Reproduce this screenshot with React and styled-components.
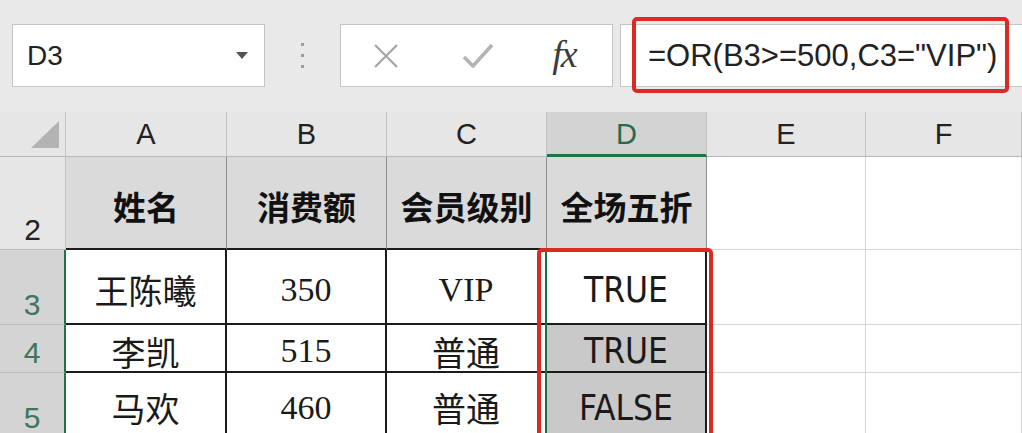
import React from "react";
import styled, { createGlobalStyle } from "styled-components";

const GlobalStyle = createGlobalStyle`
  html, body {
    margin: 0;
    padding: 0;
    background: #ffffff;
    overflow: hidden;
  }
  #root {
    width: 1022px;
    height: 433px;
    overflow: hidden;
  }
`;

const UI_FONT = `"Liberation Sans", Arial, sans-serif`;
const NARROW_FONT = `"Liberation Sans Narrow", "DejaVu Sans Condensed", "Liberation Sans", sans-serif`;
const CJK_SANS = `"Noto Sans CJK SC", sans-serif`;
const CJK_SERIF = `"Liberation Serif", "Noto Sans CJK SC", serif`;

const Page = styled.div`
  width: 1022px;
  height: 433px;
  display: flex;
  flex-direction: column;
  background: #ffffff;
`;

/* ---------- formula bar ---------- */

const Toolbar = styled.div`
  height: 112px;
  flex-shrink: 0;
  box-sizing: border-box;
  padding: 24px 0 0 12px;
  display: flex;
  align-items: flex-start;
  background: #e9e9e9;
`;

const NameBox = styled.div`
  width: 253px;
  height: 63px;
  box-sizing: border-box;
  background: #ffffff;
  border: 1px solid #c4c4c4;
  display: flex;
  align-items: center;
  justify-content: space-between;
  padding: 0 16px 0 14px;
  font-family: ${UI_FONT};
  font-size: 28px;
  color: #222222;
`;

const Caret = styled.span`
  width: 0;
  height: 0;
  border-left: 6px solid transparent;
  border-right: 6px solid transparent;
  border-top: 7px solid #555555;
`;

const Grip = styled.div`
  width: 75px;
  height: 63px;
  display: flex;
  flex-direction: column;
  align-items: center;
  justify-content: center;
  gap: 8px;
`;

const GripDot = styled.span`
  width: 3px;
  height: 3px;
  background: #9c9c9c;
`;

const ButtonBox = styled.div`
  width: 273px;
  height: 63px;
  box-sizing: border-box;
  background: #ffffff;
  border: 1px solid #c4c4c4;
  display: flex;
  align-items: center;
`;

const IconSlot = styled.div`
  width: ${(p) => p.$w}px;
  display: flex;
  justify-content: center;
  align-items: center;
`;

const Fx = styled.span`
  font-family: "Liberation Serif", "DejaVu Serif", serif;
  font-style: italic;
  font-size: 38px;
  color: #3c3c3c;
  letter-spacing: -2px;
  margin-top: -4px;
`;

const FormulaBox = styled.div`
  position: relative;
  flex: 1;
  height: 63px;
  margin-left: 7px;
  box-sizing: border-box;
  background: #ffffff;
  border: 1px solid #c4c4c4;
  border-right: none;
  display: flex;
  align-items: center;
  padding-left: 27px;
  font-family: ${UI_FONT};
  font-size: 31px;
  color: #222222;
  white-space: nowrap;
`;

const Highlight = styled.div`
  position: absolute;
  left: ${(p) => p.$left}px;
  top: ${(p) => p.$top}px;
  width: ${(p) => p.$width}px;
  height: ${(p) => p.$height}px;
  box-sizing: border-box;
  border: 4px solid #dc2a22;
  border-radius: 5px;
  pointer-events: none;
`;

/* ---------- sheet grid ---------- */

const Sheet = styled.div`
  position: relative;
  flex: 1;
  display: grid;
  grid-template-columns: 66px 161px 160px 160px 160px 159px 1fr;
  grid-template-rows: 45px 93px 75px 48px 65px;
  overflow: hidden;
`;

const Corner = styled.div`
  background: #e6e6e6;
  border-right: 1px solid #c2c2c2;
  border-bottom: 1px solid #b8b8b8;
  display: flex;
  align-items: flex-end;
  justify-content: flex-end;
  padding: 0 6px 8px 0;
`;

const ColHead = styled.div`
  box-sizing: border-box;
  background: ${(p) => (p.$active ? "#d3d3d3" : "#e6e6e6")};
  border-right: 1px solid #c2c2c2;
  border-bottom: ${(p) => (p.$active ? "3px solid #217346" : "1px solid #b8b8b8")};
  display: flex;
  align-items: center;
  justify-content: center;
  font-family: ${UI_FONT};
  font-size: 29px;
  color: ${(p) => (p.$active ? "#2a6a4b" : "#222222")};
  padding-top: ${(p) => (p.$active ? "2px" : "0")};
`;

const RowHead = styled.div`
  box-sizing: border-box;
  background: ${(p) => (p.$sel ? "#d4d4d4" : "#e6e6e6")};
  border-right: ${(p) => (p.$sel ? "2px solid #217346" : "1px solid #c2c2c2")};
  border-bottom: 1px solid #bcbcbc;
  display: flex;
  align-items: flex-end;
  justify-content: center;
  padding-bottom: 2px;
  font-family: ${UI_FONT};
  font-size: 30px;
  color: ${(p) => (p.$sel ? "#3f7560" : "#222222")};
`;

const HeadCell = styled.div`
  box-sizing: border-box;
  background: #dadada;
  border-right: 1px solid #8c8c8c;
  border-bottom: 2px solid #1c1c1c;
  display: flex;
  align-items: center;
  justify-content: center;
  padding-top: 6px;
  font-family: ${CJK_SANS};
  font-weight: 700;
  font-size: 33px;
  color: #111111;
  white-space: nowrap;
`;

const DataCell = styled.div`
  box-sizing: border-box;
  background: ${(p) => (p.$shade ? "#c9c9c9" : "#ffffff")};
  border-right: 2px solid #1c1c1c;
  border-bottom: 2px solid #1c1c1c;
  display: flex;
  align-items: center;
  justify-content: center;
  padding-top: 6px;
  font-family: ${(p) => (p.$kind === "bool" ? NARROW_FONT : CJK_SERIF)};
  font-size: ${(p) => (p.$kind === "bool" ? "35px" : "34px")};
  color: #1a1a1a;
  white-space: nowrap;
`;

const EmptyCell = styled.div`
  box-sizing: border-box;
  background: #ffffff;
  border-right: 1px solid #d6d6d6;
  border-bottom: 1px solid #d6d6d6;
`;

const Selection = styled.div`
  position: absolute;
  left: 545px;
  top: 138px;
  width: 166px;
  height: 200px;
  box-sizing: border-box;
  border-left: 2px solid #1e6b45;
  pointer-events: none;
`;

const header = ["姓名", "消费额", "会员级别", "全场五折"];
const rows = [
  { n: 3, cells: ["王陈曦", "350", "VIP", "TRUE"] },
  { n: 4, cells: ["李凯", "515", "普通", "TRUE"] },
  { n: 5, cells: ["马欢", "460", "普通", "FALSE"] },
];

const CloseIcon = () => (
  <svg width="30" height="30" viewBox="0 0 30 30">
    <path d="M4 4 L26 26 M26 4 L4 26" stroke="#a8a8a8" strokeWidth="2.4" fill="none" />
  </svg>
);

const CheckIcon = () => (
  <svg width="34" height="30" viewBox="0 0 34 30">
    <path d="M3 16 L12 25 L31 4" stroke="#b4b4b4" strokeWidth="3.6" fill="none" strokeLinejoin="round" />
  </svg>
);

const CornerMark = () => (
  <svg width="28" height="27" viewBox="0 0 28 27">
    <polygon points="28,0 28,27 0,27" fill="#b3b3b3" />
  </svg>
);

const App = () => {
  return (
    <Page>
      <GlobalStyle />
      <Toolbar>
        <NameBox>
          D3
          <Caret />
        </NameBox>
        <Grip>
          <GripDot />
          <GripDot />
          <GripDot />
        </Grip>
        <ButtonBox>
          <IconSlot $w={90}>
            <CloseIcon />
          </IconSlot>
          <IconSlot $w={94}>
            <CheckIcon />
          </IconSlot>
          <IconSlot $w={78}>
            <Fx>fx</Fx>
          </IconSlot>
        </ButtonBox>
        <FormulaBox>
          =OR(B3&gt;=500,C3="VIP")
          <Highlight $left={11} $top={-8} $width={377} $height={76} />
        </FormulaBox>
      </Toolbar>

      <Sheet>
        <Corner>
          <CornerMark />
        </Corner>
        {["A", "B", "C", "D", "E", "F"].map((c) => (
          <ColHead key={c} $active={c === "D"}>
            {c}
          </ColHead>
        ))}

        <RowHead>2</RowHead>
        {header.map((h) => (
          <HeadCell key={h}>{h}</HeadCell>
        ))}
        <EmptyCell />
        <EmptyCell />

        {rows.map((r) => (
          <React.Fragment key={r.n}>
            <RowHead $sel>{r.n}</RowHead>
            {r.cells.map((v, i) => (
              <DataCell
                key={i}
                $kind={i === 3 ? "bool" : "text"}
                $shade={i === 3 && r.n !== 3}
              >
                {v}
              </DataCell>
            ))}
            <EmptyCell />
            <EmptyCell />
          </React.Fragment>
        ))}

        <Selection />
        <Highlight $left={537} $top={136} $width={176} $height={220} />
      </Sheet>
    </Page>
  );
};

export default App;
